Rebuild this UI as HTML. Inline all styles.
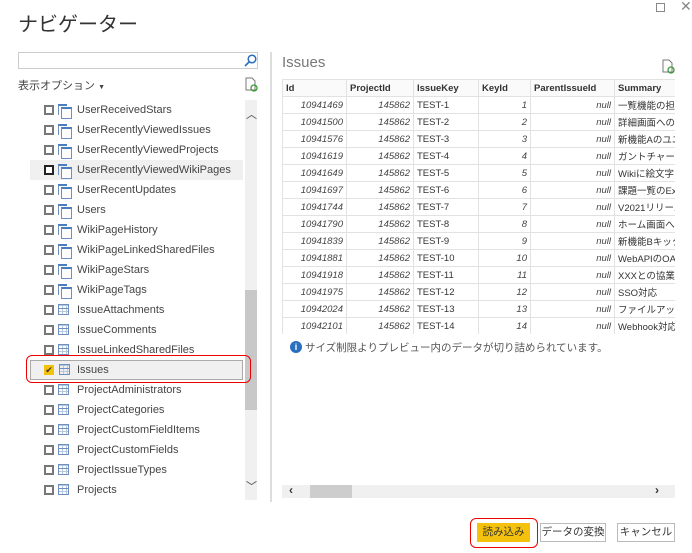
<!DOCTYPE html>
<html><head><meta charset="utf-8"><style>
*{margin:0;padding:0;box-sizing:border-box}
body{width:692px;height:553px;background:#fff;position:relative;overflow:hidden;font-family:"Liberation Sans","Noto Sans CJK JP",sans-serif;color:#333}
.a{position:absolute}
.row{position:absolute;left:30px;width:213px;height:20px;font-size:11px;color:#444;line-height:20px}
.cb{position:absolute;left:14px;top:5px;width:10px;height:10px;border:2px solid #777;background:#fff}
.ic{position:absolute;left:28px;top:4px;width:11px;height:11px;border:1px solid #6a8fc0}
.tv{border:none}
.tv:before{content:"";position:absolute;left:0;top:0;width:8px;height:9px;border-left:1px solid #6a8fc0;border-top:2px solid #4a7cc0}
.tv:after{content:"";position:absolute;left:3px;top:3px;width:9px;height:9px;border:1px solid #6a8fc0;border-top:2px solid #4a7cc0;background:#fff}
.tb{background:linear-gradient(#6a8fc0,#6a8fc0) 0 3px/100% 1px no-repeat,repeating-linear-gradient(90deg,transparent 0 3px,#b7c7dd 3px 4px),repeating-linear-gradient(0deg,transparent 0 2px,#b7c7dd 2px 3px)}
.tx{position:absolute;left:47px;top:0}
table{position:absolute;left:282px;top:79px;border-collapse:collapse;font-size:9.5px;table-layout:fixed}
td,th{border:1px solid #e2e2e2;height:17px;padding:0 3px;white-space:nowrap;overflow:hidden}
th{text-align:left;font-weight:bold;color:#333;background:#fafafa}
td.n{text-align:right;font-style:italic;color:#444}
.btn{font-size:10.5px;text-align:center;color:#333}
</style></head><body>
<div class="a" style="left:18px;top:8px;font-size:20px;color:#333">ナビゲーター</div>
<div class="a" style="left:656px;top:3px;width:9px;height:9px;border:1px solid #888"></div>
<div class="a" style="left:680px;top:-2px;font-size:14px;color:#888">✕</div>

<div class="a" style="left:18px;top:52px;width:240px;height:17px;border:1px solid #ccc"></div>
<svg class="a" style="left:244px;top:54px" width="13" height="13"><circle cx="8" cy="5" r="3.8" fill="none" stroke="#2a6fbf" stroke-width="1.5"/><line x1="5" y1="8" x2="1" y2="12" stroke="#2a6fbf" stroke-width="1.6"/></svg>
<div class="a" style="left:18px;top:77px;font-size:11px;color:#444">表示オプション <span style="font-size:7px">▼</span></div>
<svg class="a" style="left:245px;top:77px" width="13" height="15"><path d="M1 1h6l3 3v9H1z" fill="#fff" stroke="#777"/><circle cx="9" cy="11" r="3" fill="none" stroke="#3a9a3a" stroke-width="1.3"/></svg>

<div class="a" style="left:30px;top:160px;width:213px;height:20px;background:#f0f0f0"></div>
<div class="a" style="left:245px;top:100px;width:12px;height:400px;background:#f0f0f0"></div>
<div class="a" style="left:245px;top:290px;width:12px;height:120px;background:#c8c8c8"></div>
<div class="a" style="left:246px;top:106px;font-size:11px;color:#444">︿</div>
<div class="a" style="left:246px;top:478px;font-size:11px;color:#444">﹀</div>
<div class="a" style="left:270px;top:52px;width:2px;height:450px;background:#ddd"></div>

<div class="row" style="top:100px"><i class="cb"></i><i class="ic tv"></i><span class="tx">UserReceivedStars</span></div>
<div class="row" style="top:120px"><i class="cb"></i><i class="ic tv"></i><span class="tx">UserRecentlyViewedIssues</span></div>
<div class="row" style="top:140px"><i class="cb"></i><i class="ic tv"></i><span class="tx">UserRecentlyViewedProjects</span></div>
<div class="row" style="top:160px"><i class="cb" style="border-color:#222"></i><i class="ic tv"></i><span class="tx">UserRecentlyViewedWikiPages</span></div>
<div class="row" style="top:180px"><i class="cb"></i><i class="ic tv"></i><span class="tx">UserRecentUpdates</span></div>
<div class="row" style="top:200px"><i class="cb"></i><i class="ic tv"></i><span class="tx">Users</span></div>
<div class="row" style="top:220px"><i class="cb"></i><i class="ic tv"></i><span class="tx">WikiPageHistory</span></div>
<div class="row" style="top:240px"><i class="cb"></i><i class="ic tv"></i><span class="tx">WikiPageLinkedSharedFiles</span></div>
<div class="row" style="top:260px"><i class="cb"></i><i class="ic tv"></i><span class="tx">WikiPageStars</span></div>
<div class="row" style="top:280px"><i class="cb"></i><i class="ic tv"></i><span class="tx">WikiPageTags</span></div>
<div class="row" style="top:300px"><i class="cb"></i><i class="ic tb"></i><span class="tx">IssueAttachments</span></div>
<div class="row" style="top:320px"><i class="cb"></i><i class="ic tb"></i><span class="tx">IssueComments</span></div>
<div class="row" style="top:340px;height:15px;overflow:hidden"><i class="cb"></i><i class="ic tb"></i><span class="tx">IssueLinkedSharedFiles</span></div>
<div class="a" style="left:26px;top:355px;width:225px;height:28px;border:1px solid #e00;border-radius:6px"></div>
<div class="row" style="top:360px;background:#f0f0f0;border:1px solid #aaa;height:20px;line-height:18px"><i class="cb" style="border:none;background:#f4c20d;left:13px;top:4px;font-style:normal;font-size:9px;line-height:10px;color:#333;text-align:center">✔</i><i class="ic tb" style="top:3px"></i><span class="tx" style="left:46px">Issues</span></div>
<div class="row" style="top:380px"><i class="cb"></i><i class="ic tb"></i><span class="tx">ProjectAdministrators</span></div>
<div class="row" style="top:400px"><i class="cb"></i><i class="ic tb"></i><span class="tx">ProjectCategories</span></div>
<div class="row" style="top:420px"><i class="cb"></i><i class="ic tb"></i><span class="tx">ProjectCustomFieldItems</span></div>
<div class="row" style="top:440px"><i class="cb"></i><i class="ic tb"></i><span class="tx">ProjectCustomFields</span></div>
<div class="row" style="top:460px"><i class="cb"></i><i class="ic tb"></i><span class="tx">ProjectIssueTypes</span></div>
<div class="row" style="top:480px"><i class="cb"></i><i class="ic tb"></i><span class="tx">Projects</span></div>

<div class="a" style="left:282px;top:54px;font-size:15px;color:#777">Issues</div>
<svg class="a" style="left:662px;top:59px" width="13" height="15"><path d="M1 1h6l3 3v9H1z" fill="#fff" stroke="#777"/><circle cx="9" cy="11" r="3" fill="none" stroke="#3a9a3a" stroke-width="1.3"/></svg>

<div class="a" style="left:282px;top:79px;width:393px;height:255px;overflow:hidden">
<table style="left:0;top:0;width:430px">
<colgroup><col style="width:64px"><col style="width:67px"><col style="width:65px"><col style="width:52px"><col style="width:84px"><col style="width:98px"></colgroup>
<tr><th>Id</th><th>ProjectId</th><th>IssueKey</th><th>KeyId</th><th>ParentIssueId</th><th>Summary</th></tr>
<tr><td class="n">10941469</td><td class="n">145862</td><td>TEST-1</td><td class="n">1</td><td class="n">null</td><td>一覧機能の担当</td></tr>
<tr><td class="n">10941500</td><td class="n">145862</td><td>TEST-2</td><td class="n">2</td><td class="n">null</td><td>詳細画面への</td></tr>
<tr><td class="n">10941576</td><td class="n">145862</td><td>TEST-3</td><td class="n">3</td><td class="n">null</td><td>新機能Aのユニ</td></tr>
<tr><td class="n">10941619</td><td class="n">145862</td><td>TEST-4</td><td class="n">4</td><td class="n">null</td><td>ガントチャート機</td></tr>
<tr><td class="n">10941649</td><td class="n">145862</td><td>TEST-5</td><td class="n">5</td><td class="n">null</td><td>Wikiに絵文字を</td></tr>
<tr><td class="n">10941697</td><td class="n">145862</td><td>TEST-6</td><td class="n">6</td><td class="n">null</td><td>課題一覧のExcel</td></tr>
<tr><td class="n">10941744</td><td class="n">145862</td><td>TEST-7</td><td class="n">7</td><td class="n">null</td><td>V2021リリース</td></tr>
<tr><td class="n">10941790</td><td class="n">145862</td><td>TEST-8</td><td class="n">8</td><td class="n">null</td><td>ホーム画面への</td></tr>
<tr><td class="n">10941839</td><td class="n">145862</td><td>TEST-9</td><td class="n">9</td><td class="n">null</td><td>新機能Bキック</td></tr>
<tr><td class="n">10941881</td><td class="n">145862</td><td>TEST-10</td><td class="n">10</td><td class="n">null</td><td>WebAPIのOAuth</td></tr>
<tr><td class="n">10941918</td><td class="n">145862</td><td>TEST-11</td><td class="n">11</td><td class="n">null</td><td>XXXとの協業プ</td></tr>
<tr><td class="n">10941975</td><td class="n">145862</td><td>TEST-12</td><td class="n">12</td><td class="n">null</td><td>SSO対応</td></tr>
<tr><td class="n">10942024</td><td class="n">145862</td><td>TEST-13</td><td class="n">13</td><td class="n">null</td><td>ファイルアップロ</td></tr>
<tr><td class="n">10942101</td><td class="n">145862</td><td>TEST-14</td><td class="n">14</td><td class="n">null</td><td>Webhook対応</td></tr>
</table></div>

<div class="a" style="left:290px;top:341px;width:12px;height:12px;border-radius:50%;background:#2a6fbf;color:#fff;font-size:9px;font-weight:bold;text-align:center;line-height:12px">i</div>
<div class="a" style="left:305px;top:340px;font-size:10.5px;color:#555">サイズ制限よりプレビュー内のデータが切り詰められています。</div>

<div class="a" style="left:282px;top:485px;width:393px;height:13px;background:#f0f0f0"></div>
<div class="a" style="left:310px;top:485px;width:42px;height:13px;background:#cdcdcd"></div>
<div class="a" style="left:289px;top:483px;font-size:12px;color:#333;font-weight:bold">‹</div>
<div class="a" style="left:655px;top:483px;font-size:12px;color:#333;font-weight:bold">›</div>

<div class="a" style="left:470px;top:518px;width:68px;height:30px;border:1px solid #e00;border-radius:6px"></div>
<div class="a btn" style="left:477px;top:523px;width:53px;height:19px;background:#f4c20d;line-height:19px">読み込み</div>
<div class="a btn" style="left:540px;top:523px;width:66px;height:19px;border:1px solid #bbb;line-height:17px">データの変換</div>
<div class="a btn" style="left:617px;top:523px;width:58px;height:19px;border:1px solid #bbb;line-height:17px">キャンセル</div>
</body></html>
